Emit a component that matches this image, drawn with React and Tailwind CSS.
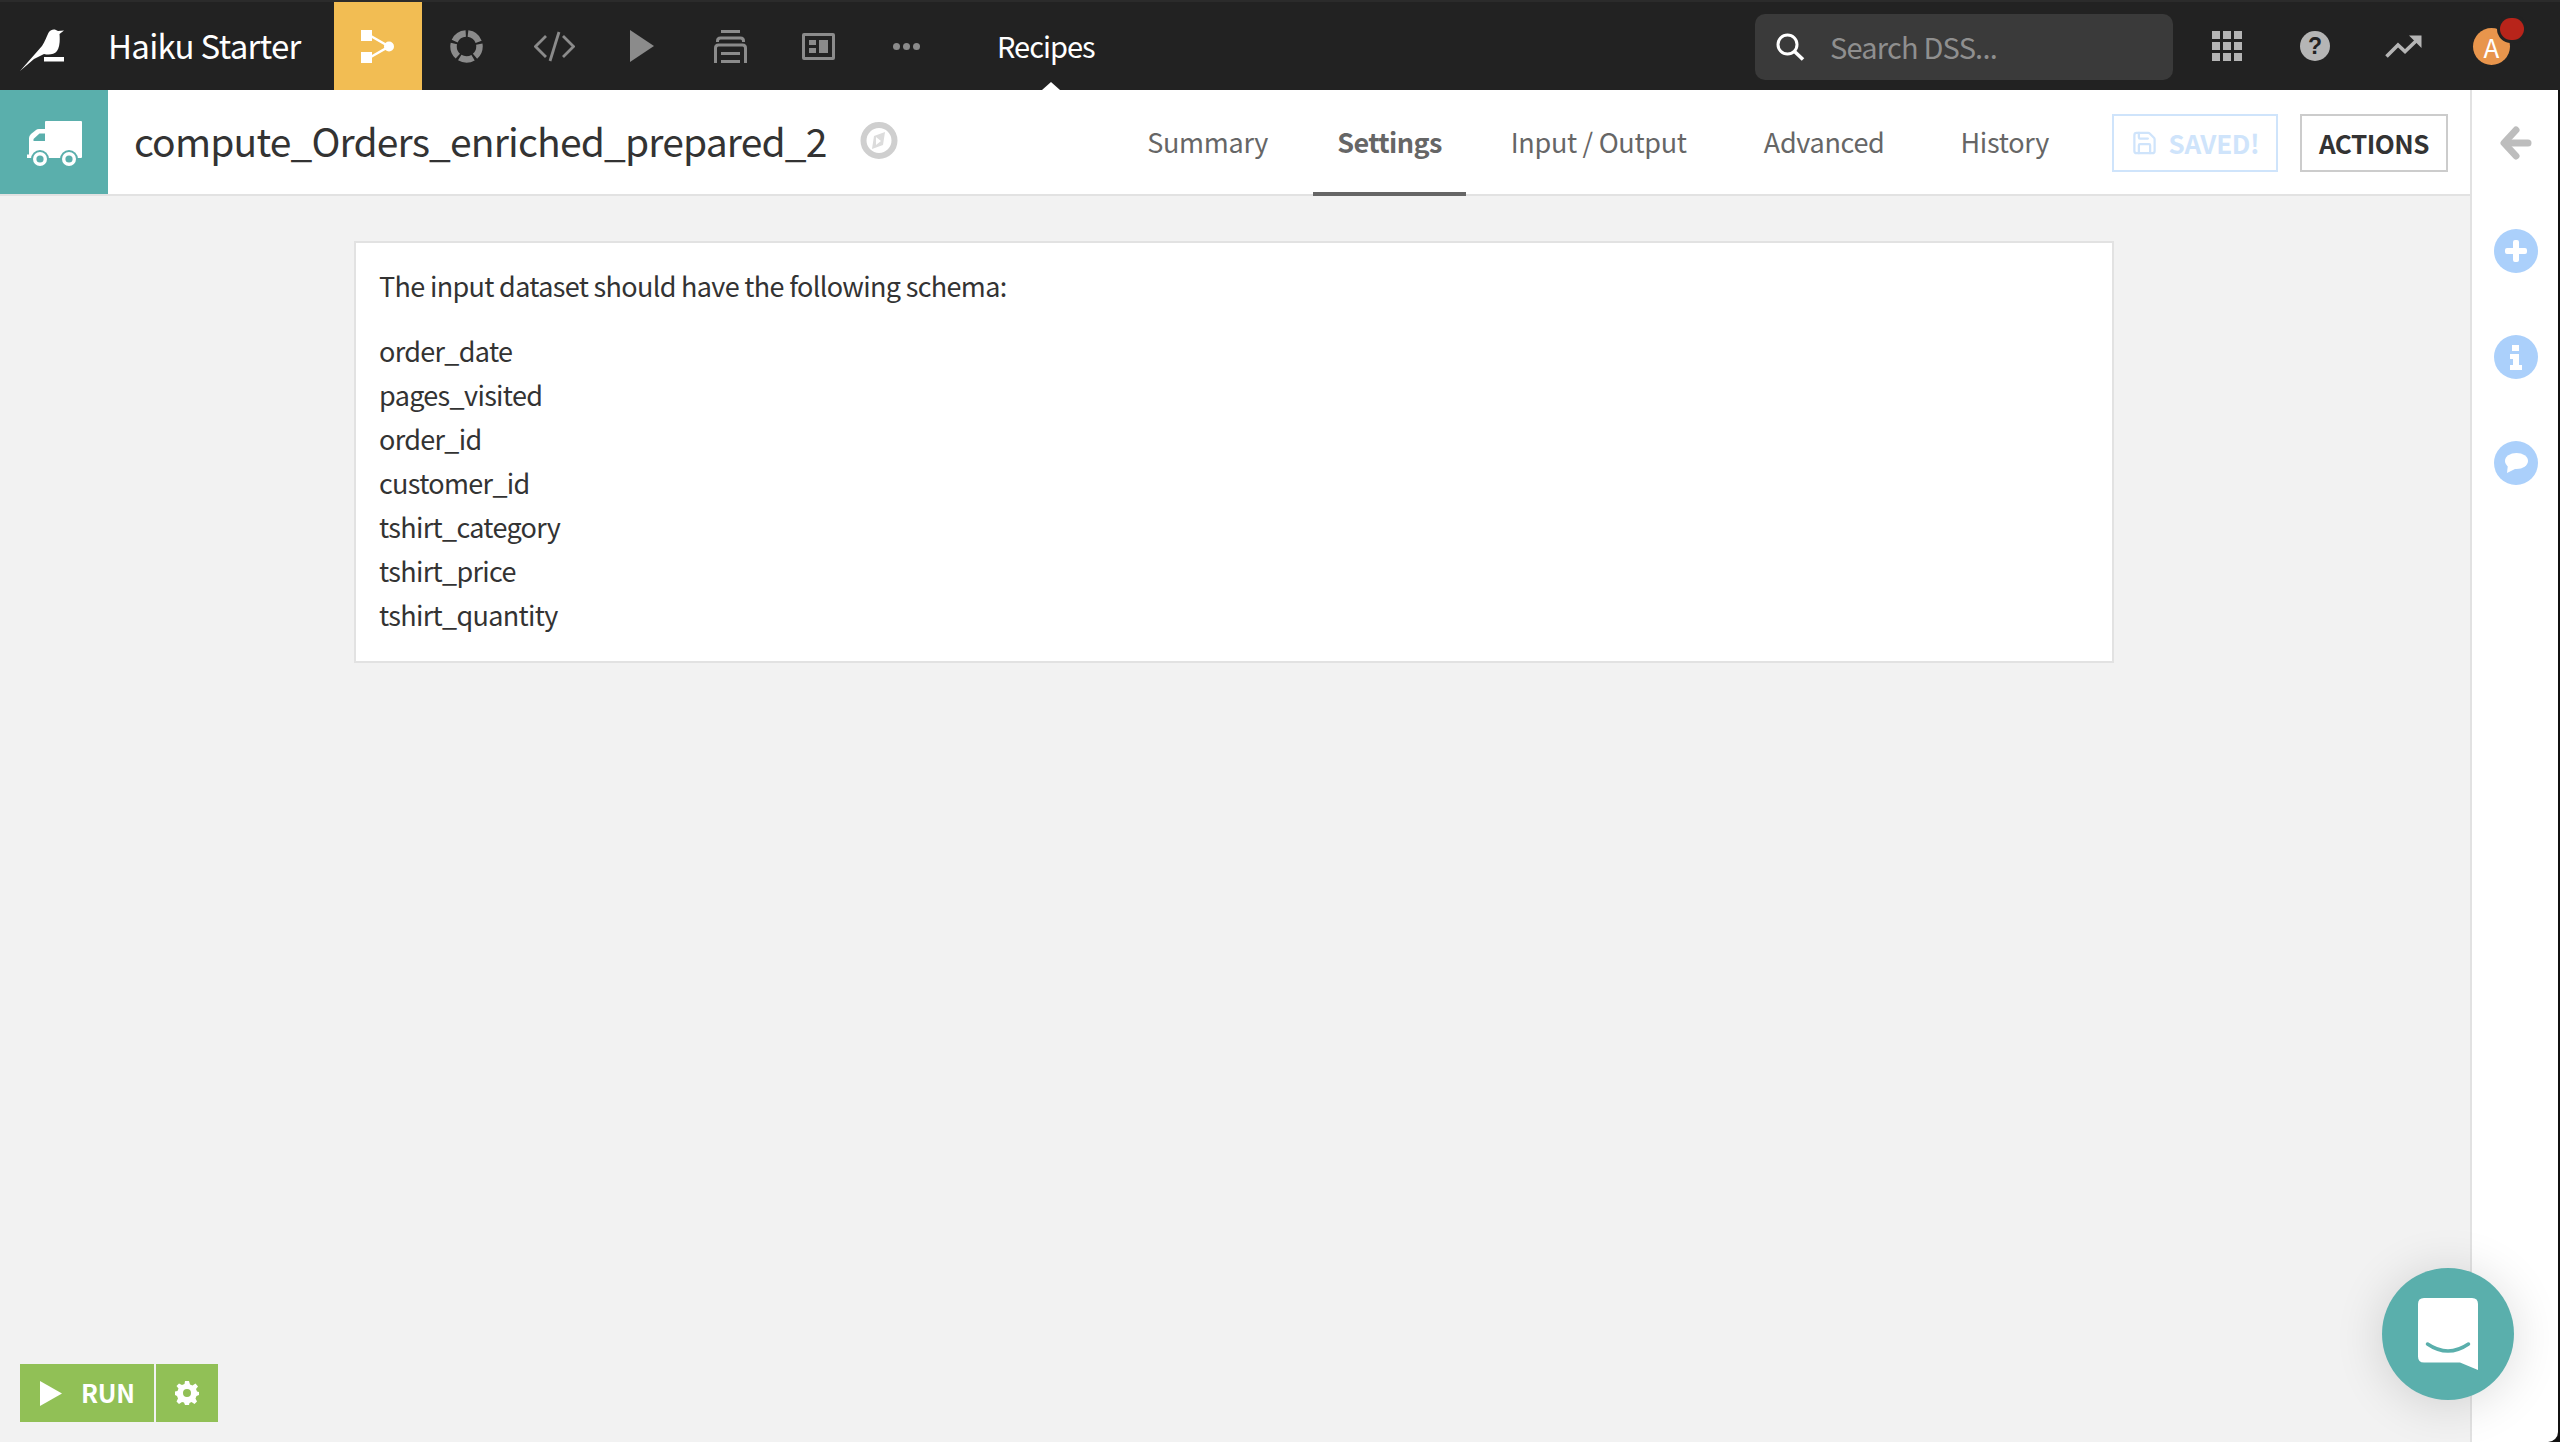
import {Save} from 'lucide-react';

const SCHEMA = ['order_date', 'pages_visited', 'order_id', 'customer_id', 'tshirt_category', 'tshirt_price', 'tshirt_quantity'];

function BirdLogo() {
    return (
        <svg width="44" height="42" viewBox="0 0 44 42" fill="#fff">
            <path d="M0 42 L22 17 C25 13 27 6 29 3 C31 0 35 -0.5 38 2 L44 1.5 L39.5 5 C40 10 40 18 37 22 C34 26 28 26 24 25 L14 30 Z"/>
            <rect x="24" y="28" width="20" height="4.5"/>
        </svg>
    );
}

function FlowIcon() {
    return (
        <svg width="33" height="33" viewBox="0 0 33 33" fill="#fff">
            <rect x="0" y="0" width="11" height="11"/>
            <rect x="0" y="22" width="11" height="11"/>
            <circle cx="28" cy="16.5" r="5"/>
            <path d="M8 5 L28 16.5 L8 28" fill="none" stroke="#fff" strokeWidth="2.5"/>
        </svg>
    );
}

function RingIcon() {
    return (
        <svg width="33" height="33" viewBox="0 0 33 33" fill="none">
            <circle cx="16.5" cy="16.5" r="13" stroke="#8b8b8b" strokeWidth="6.5" strokeDasharray="14 2.34" strokeDashoffset="-13.4"/>
        </svg>
    );
}

function CodeIcon() {
    return (
        <svg width="41" height="31" viewBox="0 0 41 31" fill="none" stroke="#8b8b8b" strokeWidth="2.8">
            <path d="M12 5 L1.5 15.5 L12 26"/>
            <path d="M29 5 L39.5 15.5 L29 26"/>
            <path d="M25 1 L16 30"/>
        </svg>
    );
}

function PlayIcon() {
    return (
        <svg width="24" height="32" viewBox="0 0 24 32" fill="#8b8b8b">
            <path d="M0 0 L24 16 L0 32 Z"/>
        </svg>
    );
}

function JobsIcon() {
    return (
        <svg width="33" height="33" viewBox="0 0 33 33" fill="none" stroke="#8b8b8b" strokeWidth="3">
            <path d="M7 1.5 H26"/>
            <path d="M3.5 12 V11 Q3.5 8 6.5 8 H26.5 Q29.5 8 29.5 11 V12"/>
            <path d="M1.5 33 V18 Q1.5 15 4.5 15 H28.5 Q31.5 15 31.5 18 V33"/>
            <path d="M7 23.5 H26"/>
            <path d="M7 31.5 H26"/>
        </svg>
    );
}

function DashIcon() {
    return (
        <svg width="33" height="27" viewBox="0 0 33 27" fill="#8b8b8b">
            <path fillRule="evenodd" d="M2 0 H31 Q33 0 33 2 V25 Q33 27 31 27 H2 Q0 27 0 25 V2 Q0 0 2 0 Z M3 3 V24 H30 V3 Z"/>
            <rect x="7" y="7" width="7" height="5"/>
            <rect x="7" y="15" width="7" height="5"/>
            <rect x="17" y="7" width="9" height="13"/>
        </svg>
    );
}

function TruckIcon() {
    return (
        <svg width="55" height="45" viewBox="0 0 55 45" fill="#fff">
            <path fillRule="evenodd" d="M18 1 Q18 0 19 0 H54 Q55 0 55 1 V36 Q55 37 54 37 H0 V33.5 H2 V17 Q2 15 4 13 L9 9 Q10 8 12 8 H18 Z M6.5 20 V18 L12.5 12.5 H18 V20 Z"/>
            <circle cx="13" cy="38" r="9" fill="#5aafac"/>
            <circle cx="13" cy="38" r="7" fill="#fff"/>
            <circle cx="13" cy="38" r="3.6" fill="#5aafac"/>
            <circle cx="42" cy="38" r="9" fill="#5aafac"/>
            <circle cx="42" cy="38" r="7" fill="#fff"/>
            <circle cx="42" cy="38" r="3.6" fill="#5aafac"/>
        </svg>
    );
}

function CompassIcon() {
    return (
        <svg width="38" height="37" viewBox="0 0 38 37" fill="none">
            <circle cx="19" cy="18.5" r="15.5" stroke="#cfcfcf" strokeWidth="6"/>
            <path d="M25 10 L23 23 L12 27 L14 14 Z" fill="#dcdcdc"/>
            <path d="M16 15 L21 19 L16 23 Z" fill="#fff"/>
        </svg>
    );
}

function SearchIcon() {
    return (
        <svg width="29" height="28" viewBox="0 0 29 28" fill="none" stroke="#fff">
            <circle cx="11.5" cy="11.5" r="9.5" strokeWidth="3"/>
            <path d="M18 18 L27 26.5" strokeWidth="3.6"/>
        </svg>
    );
}

function AppsIcon() {
    const cells = [0, 1, 2, 3, 4, 5, 6, 7, 8];
    return (
        <svg width="30" height="30" viewBox="0 0 30 30" fill="#b5b5b5">
            {cells.map((i) => (
                <rect key={i} x={(i % 3) * 11} y={Math.floor(i / 3) * 11} width="8" height="8"/>
            ))}
        </svg>
    );
}

function HelpIcon() {
    return (
        <svg width="30" height="30" viewBox="0 0 30 30">
            <circle cx="15" cy="15" r="15" fill="#b5b5b5"/>
            <text x="15" y="23" textAnchor="middle" fontSize="23" fontWeight="700" fill="#222" fontFamily="'Liberation Sans', sans-serif">?</text>
        </svg>
    );
}

function TrendIcon() {
    return (
        <svg width="37" height="23" viewBox="0 0 37 23" fill="#b5b5b5">
            <path d="M1.5 21.5 L13 10 L20 16.5 L31 6" fill="none" stroke="#b5b5b5" strokeWidth="3.6"/>
            <path d="M24 0.5 H36.5 V13 Z"/>
        </svg>
    );
}

function ChatIcon() {
    return (
        <svg width="60" height="72" viewBox="0 0 60 72">
            <path d="M6 0 H54 Q60 0 60 6 V72 L42 64.5 H6 Q0 64.5 0 58.5 V6 Q0 0 6 0 Z" fill="#fff"/>
            <path d="M9.5 46 Q30 60 50.5 46" fill="none" stroke="#5aafac" strokeWidth="3.5" strokeLinecap="round"/>
        </svg>
    );
}

function NavCell({children}) {
    return <div className="w-[88px] h-full flex items-center justify-center">{children}</div>;
}

function TopBar() {
    return (
        <div className="relative h-[90px] shrink-0 flex bg-[#222222] border-t-2 border-[#2b2b2b]">
            <div className="w-[108px] flex items-center pl-[20px] pt-[8px]">
                <BirdLogo/>
            </div>
            <div className="w-[226px] flex items-center text-[33px] tracking-[-0.7px] text-white">Haiku Starter</div>
            <NavCell>
                <div className="w-full h-full bg-[#f2bd53] flex items-center justify-center pr-[2px]">
                    <FlowIcon/>
                </div>
            </NavCell>
            <NavCell><RingIcon/></NavCell>
            <NavCell><CodeIcon/></NavCell>
            <NavCell><PlayIcon/></NavCell>
            <NavCell><JobsIcon/></NavCell>
            <NavCell><DashIcon/></NavCell>
            <NavCell>
                <div className="flex gap-[3px]">
                    <span className="w-[7px] h-[7px] rounded-full bg-[#8b8b8b]"/>
                    <span className="w-[7px] h-[7px] rounded-full bg-[#8b8b8b]"/>
                    <span className="w-[7px] h-[7px] rounded-full bg-[#8b8b8b]"/>
                </div>
            </NavCell>
            <div className="relative ml-[47px] flex items-center text-[29px] tracking-[-1px] text-white">
                Recipes
                <span className="absolute left-[45px] bottom-0 w-0 h-0 border-x-[9px] border-x-transparent border-b-[8px] border-b-white"/>
            </div>
            <div className="ml-auto mr-[50px] flex items-center">
                <div className="w-[418px] h-[66px] mt-[2px] bg-[#3a3a3a] rounded-[10px] flex items-center pl-[21px]">
                    <SearchIcon/>
                    <span className="ml-[25px] text-[29px] tracking-[-0.8px] text-[#8f8f8f]">Search DSS...</span>
                </div>
                <div className="ml-[39px]"><AppsIcon/></div>
                <div className="ml-[58px]"><HelpIcon/></div>
                <div className="ml-[55px]"><TrendIcon/></div>
                <div className="relative ml-[51px] w-[37px] h-[37px] rounded-full bg-[#e8954c] flex items-center justify-center text-[26px] text-white">
                    A
                    <span className="absolute -top-[10px] -right-[14px] w-[24px] h-[22px] rounded-[11px] bg-[#b8241a] ring-[3px] ring-[#222222]"/>
                </div>
            </div>
        </div>
    );
}

function Tab({label, active, className}) {
    return (
        <div className={`relative h-full flex items-center text-[27px] text-[#666666] ${active ? 'font-semibold tracking-[-0.6px]' : 'tracking-[-0.3px]'} ${className}`}>
            {label}
            {active && <span className="absolute -left-[24px] -right-[24px] bottom-[-2px] h-[4px] bg-[#666666]"/>}
        </div>
    );
}

function Header() {
    return (
        <div className="h-[106px] shrink-0 flex items-center bg-white border-b-2 border-[#e2e2e2]">
            <div className="w-[108px] h-full bg-[#5aafac] flex items-center justify-center pt-[3px]">
                <TruckIcon/>
            </div>
            <h1 className="ml-[26px] mb-[4px] text-[39px] tracking-[-0.83px] text-[#333333]">compute_Orders_enriched_prepared_2</h1>
            <div className="ml-[33px] mb-[4px]"><CompassIcon/></div>
            <div className="ml-auto h-full flex items-center">
                <Tab label="Summary"/>
                <Tab label="Settings" active className="ml-[69px]"/>
                <Tab label="Input / Output" className="ml-[69px]"/>
                <Tab label="Advanced" className="ml-[77px]"/>
                <Tab label="History" className="ml-[76px]"/>
                <button className="ml-[63px] mt-[1px] w-[166px] h-[58px] border-2 border-[#cfe4fb] flex items-center justify-center gap-[11px] text-[26px] font-bold tracking-[-0.3px] text-[#cfe4fb]">
                    <Save className="w-[27px] h-[30px]" strokeWidth={2}/>
                    SAVED!
                </button>
                <button className="ml-[22px] mr-[22px] mt-[1px] w-[148px] h-[58px] border-2 border-[#cccccc] flex items-center justify-center text-[26px] font-semibold tracking-[-0.5px] text-[#333333]">
                    ACTIONS
                </button>
            </div>
        </div>
    );
}

function SideCircle({children}) {
    return <div className="w-[44px] h-[44px] rounded-full bg-[#abd0fb] flex items-center justify-center">{children}</div>;
}

function Sidebar() {
    return (
        <div className="w-[90px] shrink-0 bg-[#111111] pr-[2px]">
            <div className="h-full bg-white border-l-2 border-[#e2e2e2] rounded-br-[10px] flex flex-col items-center pl-[2px]">
                <svg className="mt-[36px]" width="32" height="34" viewBox="0 0 32 34" fill="none" stroke="#bdbdbd" strokeWidth="7" strokeLinecap="round" strokeLinejoin="round">
                    <path d="M16 4 L4 17 L16 30"/>
                    <path d="M5 17 H28"/>
                </svg>
                <div className="mt-[69px] flex flex-col gap-[62px]">
                    <SideCircle>
                        <svg width="22" height="22" viewBox="0 0 22 22" fill="#fff">
                            <path d="M8 2 Q8 0 10 0 H12 Q14 0 14 2 V8 H20 Q22 8 22 10 V12 Q22 14 20 14 H14 V20 Q14 22 12 22 H10 Q8 22 8 20 V14 H2 Q0 14 0 12 V10 Q0 8 2 8 H8 Z"/>
                        </svg>
                    </SideCircle>
                    <SideCircle>
                        <svg width="14" height="25" viewBox="0 0 14 25" fill="#fff">
                            <rect x="3" y="0" width="7" height="6"/>
                            <path d="M1 9 H10 V20 H13 V25 H1 V20 H4 V14 H1 Z"/>
                        </svg>
                    </SideCircle>
                    <SideCircle>
                        <svg width="23" height="20" viewBox="0 0 23 20" fill="#fff">
                            <ellipse cx="11.5" cy="8" rx="11.5" ry="8"/>
                            <path d="M3 11 L2 20 L12 15 Z"/>
                        </svg>
                    </SideCircle>
                </div>
            </div>
        </div>
    );
}

export default function App() {
    return (
        <div className="relative w-[2560px] h-[1442px] flex flex-col overflow-hidden bg-[#f2f2f2] font-['Noto_Sans_CJK_SC','Noto_Sans',sans-serif]">
            <TopBar/>
            <div className="flex-1 flex min-h-0">
                <div className="flex-1 flex flex-col min-w-0">
                    <Header/>
                    <div className="flex-1 pl-[354px] pt-[45px]">
                        <div className="w-[1760px] h-[422px] bg-white border-2 border-[#e2e2e2] pl-[23px] pt-[21px] text-[27px] tracking-[-0.67px] leading-[44px] text-[#333333]">
                            <p className="mb-[21px]">The input dataset should have the following schema:</p>
                            {SCHEMA.map((name) => (
                                <div key={name}>{name}</div>
                            ))}
                        </div>
                    </div>
                    <div className="flex gap-[2px] pl-[20px] pb-[20px]">
                        <button className="w-[134px] h-[58px] bg-[#91c056] flex items-center pl-[20px] text-[25px] font-semibold tracking-[-0.3px] text-white">
                            <svg width="22" height="25" viewBox="0 0 22 25" fill="#fff"><path d="M0 0 L22 12.5 L0 25 Z"/></svg>
                            <span className="ml-[19px]">RUN</span>
                        </button>
                        <button className="w-[62px] h-[58px] bg-[#91c056] flex items-center justify-center">
                            <svg width="24" height="24" viewBox="0 0 24 24" fill="#fff">
                                <path fillRule="evenodd" d="M10 0 H14 L15 3.5 L17.5 4.5 L20.5 2.5 L23 5.5 L21 8 L22 10.5 L24 11 V14 L21.5 15 L20.5 17.5 L22 20.5 L19.5 23 L16.5 21 L14.5 22 L14 24 H10 L9 21.5 L7 21 L4 23 L1.5 20.5 L3 17.5 L2 15 L0 14 V10.5 L2.5 10 L3.5 7.5 L1.5 5 L4 2.5 L7 4 L9.5 3 Z M12 8 A4 4 0 1 0 12 16 A4 4 0 1 0 12 8 Z"/>
                            </svg>
                        </button>
                    </div>
                </div>
                <Sidebar/>
            </div>
            <div className="absolute left-[2382px] top-[1268px] w-[132px] h-[132px] rounded-full bg-[#5aafac] shadow-[0_4px_50px_rgba(0,0,0,0.14)] flex items-center justify-center">
                <ChatIcon/>
            </div>
        </div>
    );
}
